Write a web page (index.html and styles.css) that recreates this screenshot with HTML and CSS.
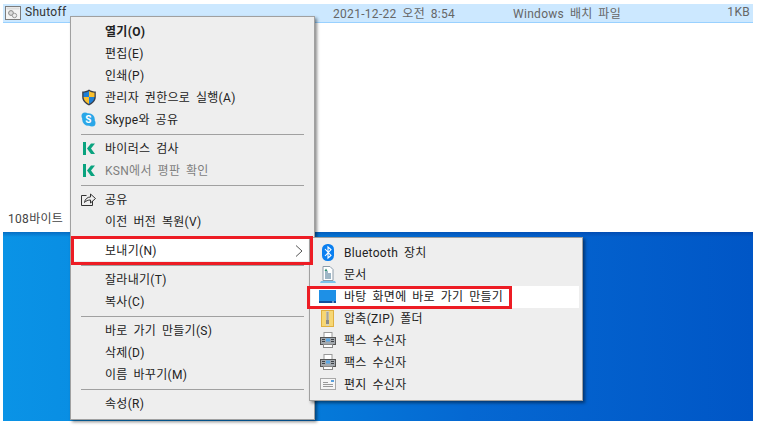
FILE: index.html
```html
<!DOCTYPE html>
<html lang="ko">
<head>
  <meta charset="UTF-8" />
  <title>보내기</title>
  <link rel="stylesheet" href="styles.css">
</head>
<body>
  <div class="page">
    <div class="explorer">
      <div class="file-row">
        <span class="file-name">
          <svg class="file-icon" width="16" height="16" viewBox="0 0 16 16">
            <rect x="0.5" y="1.5" width="15" height="13" fill="#f4f4f4" stroke="#7d7d7d"/>
            <rect x="1.5" y="2.5" width="13" height="2" fill="#dcdcdc"/>
            <circle cx="6" cy="8" r="2.4" fill="#ddd" stroke="#888"/>
            <circle cx="9.5" cy="10.5" r="2.2" fill="#eee" stroke="#999"/>
          </svg>
          Shutoff
        </span>
        <span class="file-date">2021-12-22 오전 8:54</span>
        <span class="file-type">Windows 배치 파일</span>
        <span class="file-size">1KB</span>
      </div>
      <div class="status">108바이트</div>
    </div>
    <div class="desktop"></div>
  </div>

  <!-- 오른쪽 클릭 메뉴 -->
  <div class="menu main-menu">
    <div class="item bold"><span class="cell"></span>열기(O)</div>
    <div class="item"><span class="cell"></span>편집(E)</div>
    <div class="item"><span class="cell"></span>인쇄(P)</div>
    <div class="item">
      <span class="cell">
        <svg width="16" height="17" viewBox="0 0 16 17">
          <path d="M8 .5C6 2 3.5 2.6 1.2 2.6V8c0 4 3 6.8 6.8 8.5 3.800-1.700 6.800-4.500 6.800-8.500V2.600C12.500 2.600 10 2 8 .5z" fill="#3a3f4a"/>
          <path d="M8 2C6.500 3 4.500 3.600 2.500 3.800V8H8z" fill="#1d7fd6"/>
          <path d="M8 2c1.500 1 3.500 1.600 5.500 1.800V8H8z" fill="#fbc02d"/>
          <path d="M2.500 8H8v7C5 13.500 2.700 11.300 2.500 8z" fill="#fbc02d"/>
          <path d="M13.500 8H8v7c3-1.500 5.300-3.700 5.500-7z" fill="#1d7fd6"/>
        </svg>
      </span>
      관리자 권한으로 실행(A)
    </div>
    <div class="item">
      <span class="cell">
        <svg width="15" height="15" viewBox="0 0 15 15">
          <circle cx="4" cy="4" r="3.500" fill="#2ba7e8"/>
          <circle cx="11" cy="11" r="3.500" fill="#2ba7e8"/>
          <circle cx="7.500" cy="7.500" r="6.300" fill="#2ba7e8"/>
          <text x="7.500" y="11.200" class="skype-s">S</text>
        </svg>
      </span>
      Skype와 공유
    </div>
    <div class="sep"></div>
    <div class="item">
      <span class="cell">
        <svg width="12" height="13" viewBox="0 0 12 13">
          <path d="M0 0h3v13H0zM4 6.500 8 1.500h4L8 6.500l4 5.500H8z" fill="#0aa37f"/>
        </svg>
      </span>
      바이러스 검사
    </div>
    <div class="item disabled">
      <span class="cell">
        <svg width="12" height="13" viewBox="0 0 12 13">
          <path d="M0 0h3v13H0zM4 6.500 8 1.500h4L8 6.500l4 5.500H8z" fill="#0aa37f"/>
        </svg>
      </span>
      KSN에서 평판 확인
    </div>
    <div class="sep"></div>
    <div class="item">
      <span class="cell">
        <svg width="15" height="14" viewBox="0 0 15 14" fill="none" stroke="#333">
          <path d="M5.500 3.500H.5v10h11V9"/>
          <path d="M3.500 10.500C4 7 6.500 5 9.500 5V2l5 4.500-5 4.500V8C7 8 5 8.800 3.500 10.500z"/>
        </svg>
      </span>
      공유
    </div>
    <div class="item"><span class="cell"></span>이전 버전 복원(V)</div>
    <div class="sep"></div>
    <div class="item hot marked">
      <span class="cell"></span>보내기(N)
      <svg class="arrow" width="8" height="12" viewBox="0 0 8 12" fill="none" stroke="#555">
        <path d="M1 .5 7 6l-6 5.500"/>
      </svg>
    </div>
    <div class="sep"></div>
    <div class="item"><span class="cell"></span>잘라내기(T)</div>
    <div class="item"><span class="cell"></span>복사(C)</div>
    <div class="sep"></div>
    <div class="item"><span class="cell"></span>바로 가기 만들기(S)</div>
    <div class="item"><span class="cell"></span>삭제(D)</div>
    <div class="item"><span class="cell"></span>이름 바꾸기(M)</div>
    <div class="sep"></div>
    <div class="item"><span class="cell"></span>속성(R)</div>
  </div>

  <!-- 보내기 하위 메뉴 -->
  <div class="menu sub-menu">
    <div class="item">
      <span class="cell">
        <svg width="12" height="17" viewBox="0 0 12 17">
          <rect width="12" height="17" rx="5.500" fill="#0a7ff0"/>
          <path d="M3 5l6 6.500L6 14V3l3 2.500L3 12" fill="none" stroke="#fff" stroke-width="1.100"/>
        </svg>
      </span>
      Bluetooth 장치
    </div>
    <div class="item">
      <span class="cell">
        <svg width="16" height="17" viewBox="0 0 16 17">
          <path d="M3 .5h7l3 3v11H3z" fill="#fff" stroke="#8a9aa8"/>
          <path d="M5 6h3M5 8h6M5 10h6M5 12h6" stroke="#3a6d8c"/>
          <path d="M6 2.500 7.500 5h-3z" fill="#2e8f6f"/>
          <path d="M1 15h14l1 2H0z" fill="#7cc4ea"/>
        </svg>
      </span>
      문서
    </div>
    <div class="item hot marked short">
      <span class="cell">
        <svg width="17" height="13" viewBox="0 0 17 13">
          <rect width="17" height="13" fill="#1e90e6"/>
          <rect y="11" width="17" height="2" fill="#0f4f9e"/>
          <rect x="13" y="11.500" width="2" height="1" fill="#cfe6f7"/>
        </svg>
      </span>
      바탕 화면에 바로 가기 만들기
    </div>
    <div class="item">
      <span class="cell">
        <svg width="13" height="17" viewBox="0 0 13 17">
          <rect x=".5" y=".5" width="12" height="16" fill="#f7d774" stroke="#e0b040"/>
          <rect x="5" y="1" width="3" height="15" fill="#d8d2bb"/>
          <path d="M5.500 3h2M5.500 5h2M5.500 7h2M5.500 9h2" stroke="#777"/>
          <rect x="5" y="10" width="3" height="4" fill="#8a8a8a"/>
        </svg>
      </span>
      압축(ZIP) 폴더
    </div>
    <div class="item">
      <span class="cell">
        <svg width="16" height="16" viewBox="0 0 16 16"><use href="#fax"/></svg>
      </span>
      팩스 수신자
    </div>
    <div class="item">
      <span class="cell">
        <svg width="16" height="16" viewBox="0 0 16 16"><use href="#fax"/></svg>
      </span>
      팩스 수신자
    </div>
    <div class="item">
      <span class="cell">
        <svg width="16" height="12" viewBox="0 0 16 12">
          <rect x=".5" y=".5" width="15" height="11" fill="#f6f6f6" stroke="#a8a8a8"/>
          <path d="M3 4.500h5M3 6.500h10M3 8.500h10" stroke="#9a9a9a"/>
          <rect x="11" y="2" width="3" height="2" fill="#5aa0dc"/>
        </svg>
      </span>
      편지 수신자
    </div>
  </div>

  <svg class="defs" width="0" height="0">
    <symbol id="fax" viewBox="0 0 16 16">
      <rect x="4" y=".5" width="8" height="5" fill="#fff" stroke="#999"/>
      <rect x=".5" y="5.500" width="15" height="7" fill="#a4a9ae" stroke="#555"/>
      <rect x="6" y="6.500" width="4" height="3" fill="#5aa8e6"/>
      <path d="M2 7.500h3M2 9.500h3M11 7.500h3M11 9.500h3" stroke="#3d4248"/>
      <rect x="3.500" y="12.500" width="9" height="3" fill="#fff" stroke="#888"/>
    </symbol>
  </svg>
</body>
</html>
```

FILE: styles.css
```css
* {
  box-sizing: border-box;
}

html, body {
  margin: 0;
  height: 100%;
  background: #fff;
}

body {
  font-family: Roboto, "Noto Sans CJK KR", sans-serif;
  font-size: 12px;
  letter-spacing: 0.3px;
  word-spacing: 2.5px;
  color: #222;
  overflow: hidden;
  position: relative;
}

.page {
  display: flex;
  flex-direction: column;
  width: 760px;
  height: 427px;
  padding: 4px 7px 6px 3px;
}

.explorer {
  height: 228px;
  display: flex;
  flex-direction: column;
}

.file-row {
  display: flex;
  align-items: center;
  height: 19px;
  padding-bottom: 2px;
  background: #cce8ff;
  border-bottom: 1px solid #99d1ff;
  color: #666;
}

.file-name {
  display: flex;
  align-items: center;
  gap: 4px;
  width: 330px;
  padding-left: 2px;
  color: #333;
}

.file-icon {
  margin: 1px 0 -1px;
}

.file-date {
  width: 180px;
}

.file-type {
  flex: 1;
}

.file-size {
  padding-right: 3px;
}

.status {
  margin-top: auto;
  padding: 0 0 6px 5px;
  color: #444;
}

.desktop {
  flex: 1;
  background:
    linear-gradient(to bottom, rgba(0, 40, 130, 0.35), rgba(0, 40, 130, 0) 5px),
    linear-gradient(to right, #0a93e6 0%, #0580dc 35%, #0568d2 62%, #0056c6 100%);
}

.menu {
  position: absolute;
  background: #eee;
  border: 1px solid #a0a0a0;
  box-shadow: 2px 2px 3px rgba(0, 0, 0, 0.45);
  padding: 3px 1px 5px;
}

.main-menu {
  left: 70px;
  top: 16px;
  width: 245px;
}

.sub-menu {
  left: 309px;
  top: 237px;
  width: 274px;
  padding-right: 3px;
}

.item {
  display: flex;
  align-items: center;
  height: 22px;
  padding-bottom: 2px;
  position: relative;
  white-space: nowrap;
}

.cell {
  display: flex;
  align-items: center;
  justify-content: center;
  width: 33px;
  flex: none;
  margin: 1px 0 -1px;
}

.bold {
  font-weight: 700;
}

.disabled {
  color: #7f7f7f;
}

.hot {
  background: #fff;
}

.marked::after {
  content: "";
  position: absolute;
  left: -1px;
  right: 0;
  top: -3px;
  bottom: -4px;
  border: 3px solid #ed1c24;
  z-index: 2;
}

.short {
  height: 23px;
  margin-bottom: -1px;
  padding-bottom: 3px;
  background: linear-gradient(#fff, #fff) 0 1px no-repeat;
}

.short::after {
  left: -4px;
  right: 67px;
  top: 1px;
  bottom: -1px;
}

.sep {
  height: 1px;
  margin: 4px 9px 2px;
  background: #a0a0a0;
}

.arrow {
  position: absolute;
  right: 10px;
  top: 6px;
}

.skype-s {
  font-size: 10px;
  font-weight: 700;
  fill: #fff;
  text-anchor: middle;
}

.defs {
  position: absolute;
}
```
